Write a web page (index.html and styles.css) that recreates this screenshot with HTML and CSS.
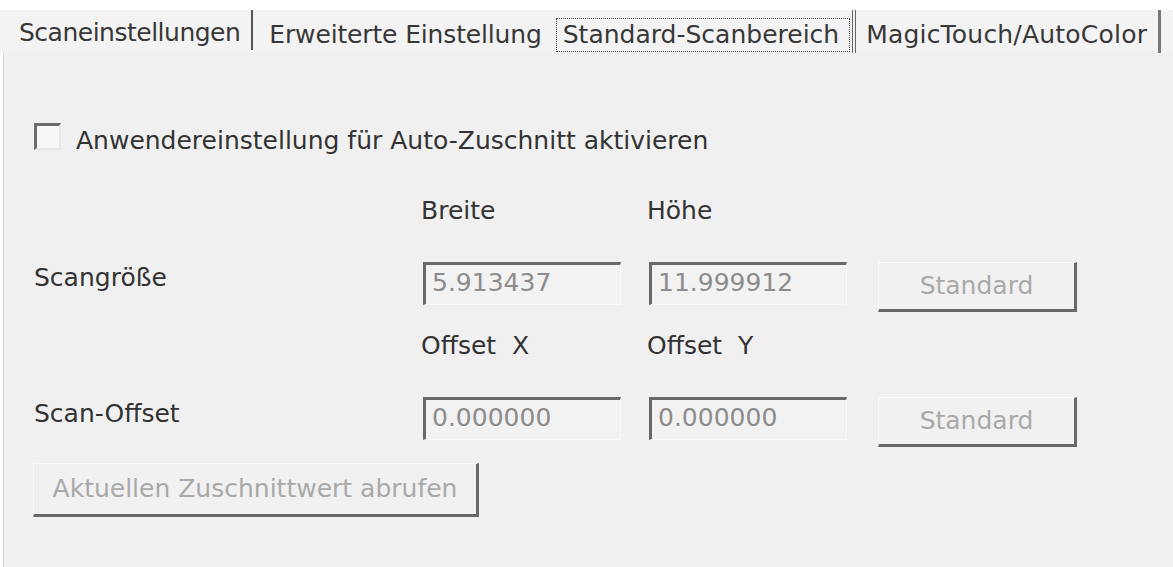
FILE: index.html
```html
<!DOCTYPE html>
<html lang="de">
<head>
<meta charset="utf-8">
<title>Standard-Scanbereich</title>
<link rel="stylesheet" href="styles.css">
</head>
<body>
<div class="dialog">
  <div class="tabs">
    <div class="tab tab-first">Scaneinstellungen</div>
    <div class="tab tab-plain">Erweiterte Einstellung</div>
    <div class="tab tab-active"><span class="focus">Standard-Scanbereich</span></div>
    <div class="tab tab-last">MagicTouch/AutoColor</div>
  </div>
  <div class="panel">
    <label class="check-row">
      <span class="checkbox"></span>
      <span class="check-label">Anwendereinstellung für Auto-Zuschnitt aktivieren</span>
    </label>
    <div class="form">
      <div class="cell-empty"></div>
      <div class="head">Breite</div>
      <div class="head">Höhe</div>
      <div class="cell-empty"></div>

      <div class="row-label">Scangröße</div>
      <div class="field">5.913437</div>
      <div class="field">11.999912</div>
      <div class="btn btn-std">Standard</div>

      <div class="cell-empty"></div>
      <div class="head">Offset&nbsp; X</div>
      <div class="head">Offset&nbsp; Y</div>
      <div class="cell-empty"></div>

      <div class="row-label">Scan-Offset</div>
      <div class="field">0.000000</div>
      <div class="field">0.000000</div>
      <div class="btn btn-std">Standard</div>
    </div>
    <div class="btn btn-wide">Aktuellen Zuschnittwert abrufen</div>
  </div>
</div>
</body>
</html>
```
FILE: styles.css
```css
html, body {
  margin: 0;
  padding: 0;
  background: #ffffff;
}
body {
  font-family: "DejaVu Sans", "Liberation Sans", sans-serif;
  font-size: 25px;
  color: #333333;
  width: 1173px;
  height: 567px;
  overflow: hidden;
}
.dialog {
  display: flex;
  flex-direction: column;
  height: 567px;
  padding-top: 10px;
  box-sizing: border-box;
}
.tabs {
  display: flex;
  align-items: stretch;
  height: 43px;
  background: #f3f3f3;
}
.tab {
  display: flex;
  align-items: center;
  padding-top: 6px;
  line-height: 30px;
  color: #383838;
  white-space: nowrap;
}
.tab-first {
  padding-left: 19px;
  padding-right: 11px;
  letter-spacing: -0.5px;
  border-right: 2px solid #555555;
  margin-bottom: 3px;
}
.tab-plain {
  padding-left: 16px;
  padding-right: 14px;
  letter-spacing: -0.15px;
}
.tab-active {
  padding-right: 2px;
  border-right: 4px double #666666;
}
.focus {
  border: 1px dotted #444444;
  padding: 1px 10px 1px 6px;
  line-height: 30px;
}
.tab-last {
  padding-left: 10px;
  padding-right: 11px;
  letter-spacing: 0.2px;
  border-right: 3px solid #777777;
}
.panel {
  flex: 1;
  background: #f0f0f0;
  border-left: 1px solid #d8d8d8;
  margin-left: 3px;
  padding: 70px 0 0 30px;
}
.check-row {
  display: flex;
  align-items: flex-start;
  height: 33px;
  gap: 15px;
}
.checkbox {
  width: 27px;
  height: 27px;
  box-sizing: border-box;
  border-top: 3px solid #6c6c6c;
  border-left: 3px solid #6c6c6c;
  border-right: 2px solid #e6e6e6;
  border-bottom: 2px solid #e6e6e6;
  background: #f7f7f7;
}
.check-label {
  margin-top: 3px;
  line-height: 30px;
  color: #333333;
}
.form {
  display: grid;
  grid-template-columns: 361px 198px 198px 202px;
  grid-template-rows: 30px 86px 49px 87px;
  column-gap: 28px;
  margin-top: 40px;
}
.form > div:nth-child(n+5):nth-child(-n+8) { margin-top: 36px; }
.form > div:nth-child(n+9):nth-child(-n+12) { margin-top: 19px; }
.form > div:nth-child(n+13) { margin-top: 36px; }
.head {
  line-height: 30px;
  color: #333333;
  margin-left: -2px;
  white-space: nowrap;
}
.row-label {
  line-height: 30px;
  color: #333333;
  padding-top: 1px;
}
.form > .row-label:nth-child(13) { padding-top: 2px; }
.field {
  align-self: start;
  height: 43px;
  box-sizing: border-box;
  border-top: 3px solid #696969;
  border-left: 3px solid #696969;
  border-right: 1px solid #f9f9f9;
  border-bottom: 1px solid #f9f9f9;
  background: #f2f2f2;
  color: #8c8c8c;
  line-height: 36px;
  padding-left: 6px;
  white-space: nowrap;
}
.btn {
  box-sizing: border-box;
  background: #f1f1f1;
  border-top: 1px solid #fbfbfb;
  border-left: 1px solid #fbfbfb;
  border-right: 3px solid #686868;
  border-bottom: 3px solid #686868;
  color: #a9a9a9;
  text-align: center;
  white-space: nowrap;
}
.btn-std {
  align-self: start;
  height: 50px;
  line-height: 45px;
  margin-left: 3px;
}
.btn-wide {
  width: 446px;
  height: 54px;
  line-height: 50px;
  margin-top: 15px;
  margin-left: -1px;
}
```
